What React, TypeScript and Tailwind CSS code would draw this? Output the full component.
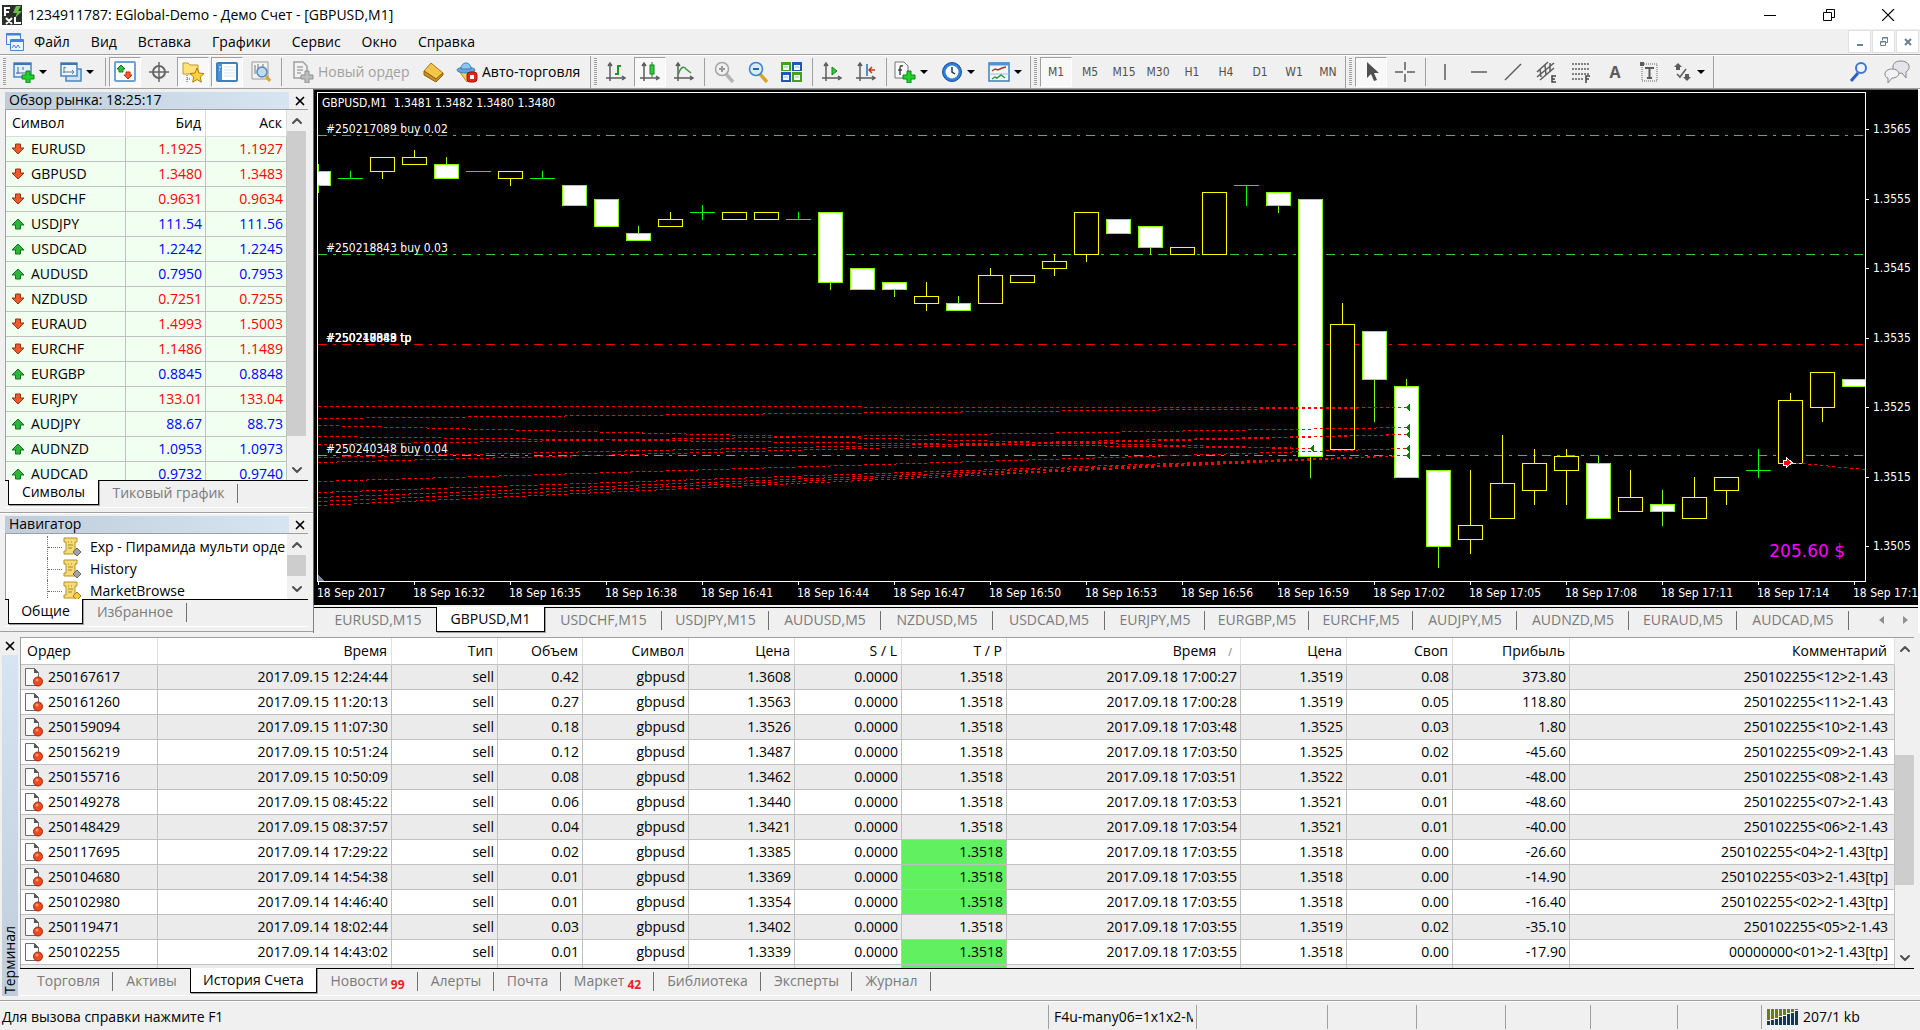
import type { ReactNode } from "react";
import { ChevronDown, ChevronUp, X } from "lucide-react";
import clsx from "clsx";

type Quote = { symbol: string; bid: string; ask: string; up: boolean };

const quotes: Quote[] = [
  { symbol: "EURUSD", bid: "1.1925", ask: "1.1927", up: false },
  { symbol: "GBPUSD", bid: "1.3480", ask: "1.3483", up: false },
  { symbol: "USDCHF", bid: "0.9631", ask: "0.9634", up: false },
  { symbol: "USDJPY", bid: "111.54", ask: "111.56", up: true },
  { symbol: "USDCAD", bid: "1.2242", ask: "1.2245", up: true },
  { symbol: "AUDUSD", bid: "0.7950", ask: "0.7953", up: true },
  { symbol: "NZDUSD", bid: "0.7251", ask: "0.7255", up: false },
  { symbol: "EURAUD", bid: "1.4993", ask: "1.5003", up: false },
  { symbol: "EURCHF", bid: "1.1486", ask: "1.1489", up: false },
  { symbol: "EURGBP", bid: "0.8845", ask: "0.8848", up: true },
  { symbol: "EURJPY", bid: "133.01", ask: "133.04", up: false },
  { symbol: "AUDJPY", bid: "88.67", ask: "88.73", up: true },
  { symbol: "AUDNZD", bid: "1.0953", ask: "1.0973", up: true },
  { symbol: "AUDCAD", bid: "0.9732", ask: "0.9740", up: true },
];

// [high, top, bottom, low, kind] in pips above 1.3500
type Kind = "bull" | "bear" | "doji";
const candles: [number, number, number, number, Kind][] = [
  [60, 59, 57, 56, "bear"],
  [59, 58, 58, 58, "doji"],
  [61, 61, 59, 58, "bull"],
  [62, 61, 60, 60, "bull"],
  [61, 60, 58, 58, "bear"],
  [59, 59, 59, 59, "doji"],
  [59, 59, 58, 57, "bull"],
  [59, 58, 58, 58, "doji"],
  [57, 57, 54, 54, "bear"],
  [55, 55, 51, 51, "bear"],
  [51, 50, 49, 49, "bear"],
  [53, 52, 51, 51, "bull"],
  [54, 53, 53, 52, "doji"],
  [53, 53, 52, 52, "bull"],
  [53, 53, 52, 52, "bull"],
  [53, 52, 52, 52, "doji"],
  [53, 53, 43, 42, "bear"],
  [45, 45, 42, 42, "bear"],
  [43, 43, 42, 41, "bear"],
  [43, 41, 40, 39, "bull"],
  [41, 40, 39, 39, "bear"],
  [45, 44, 40, 40, "bull"],
  [44, 44, 43, 43, "bull"],
  [47, 46, 45, 44, "bull"],
  [53, 53, 47, 46, "bull"],
  [52, 52, 50, 50, "bear"],
  [51, 51, 48, 47, "bear"],
  [48, 48, 47, 47, "bull"],
  [56, 56, 47, 47, "bull"],
  [57, 57, 57, 54, "doji"],
  [56, 56, 54, 53, "bear"],
  [55, 55, 18, 15, "bear"],
  [40, 37, 19, 19, "bull"],
  [36, 36, 29, 23, "bear"],
  [29, 28, 15, 15, "bear"],
  [16, 16, 5, 2, "bear"],
  [16, 8, 6, 4, "bull"],
  [21, 14, 9, 9, "bull"],
  [19, 17, 13, 11, "bull"],
  [19, 18, 16, 11, "bull"],
  [18, 17, 9, 9, "bear"],
  [16, 12, 10, 10, "bull"],
  [13, 11, 10, 8, "bear"],
  [15, 12, 9, 9, "bull"],
  [15, 15, 13, 11, "bull"],
  [19, 16, 16, 15, "doji"],
  [27, 26, 17, 17, "bull"],
  [30, 30, 25, 23, "bull"],
  [29, 29, 28, 28, "bear"],
];

// closed deals drawn as [x1, y1, x2, y2]
const deals = [
  [0, 313, 1090, 314],
  [0, 325, 1090, 314],
  [0, 332, 994, 355],
  [0, 343, 994, 355],
  [0, 351, 1090, 334],
  [0, 364, 1090, 341],
  [0, 369, 1090, 341],
  [0, 388, 1090, 355],
  [0, 399, 1090, 362],
  [0, 404, 1090, 362],
  [0, 408, 1090, 362],
  [0, 412, 1090, 362],
  [1472, 369, 1547, 376],
];

const exits = [
  [1088, 314],
  [1088, 334],
  [1088, 341],
  [1088, 355],
  [1088, 362],
  [992, 355],
];

const times = [
  "2017", "16:32", "16:35", "16:38", "16:41", "16:44", "16:47", "16:50", "16:53",
  "16:56", "16:59", "17:02", "17:05", "17:08", "17:11", "17:14", "17:17",
];

const prices = ["1.3565", "1.3555", "1.3545", "1.3535", "1.3525", "1.3515", "1.3505"];

const chartTabs = [
  { name: "EURUSD,M15", width: "w-[122px] pl-[6px]" },
  { name: "GBPUSD,M1", width: "w-[109px]" },
  { name: "USDCHF,M15", width: "w-[117px]" },
  { name: "USDJPY,M15", width: "w-[107px]" },
  { name: "AUDUSD,M5", width: "w-[112px]" },
  { name: "NZDUSD,M5", width: "w-[112px]" },
  { name: "USDCAD,M5", width: "w-[112px]" },
  { name: "EURJPY,M5", width: "w-[100px]" },
  { name: "EURGBP,M5", width: "w-[104px]" },
  { name: "EURCHF,M5", width: "w-[104px]" },
  { name: "AUDJPY,M5", width: "w-[104px]" },
  { name: "AUDNZD,M5", width: "w-[112px]" },
  { name: "EURAUD,M5", width: "w-[108px]" },
  { name: "AUDCAD,M5", width: "w-[112px]" },
];

const orders = [
  ["250167617", "2017.09.15 12:24:44", "0.42", "1.3608", "2017.09.18 17:00:27", "1.3519", "0.08", "373.80", "250102255<12>2-1.43"],
  ["250161260", "2017.09.15 11:20:13", "0.27", "1.3563", "2017.09.18 17:00:28", "1.3519", "0.05", "118.80", "250102255<11>2-1.43"],
  ["250159094", "2017.09.15 11:07:30", "0.18", "1.3526", "2017.09.18 17:03:48", "1.3525", "0.03", "1.80", "250102255<10>2-1.43"],
  ["250156219", "2017.09.15 10:51:24", "0.12", "1.3487", "2017.09.18 17:03:50", "1.3525", "0.02", "-45.60", "250102255<09>2-1.43"],
  ["250155716", "2017.09.15 10:50:09", "0.08", "1.3462", "2017.09.18 17:03:51", "1.3522", "0.01", "-48.00", "250102255<08>2-1.43"],
  ["250149278", "2017.09.15 08:45:22", "0.06", "1.3440", "2017.09.18 17:03:53", "1.3521", "0.01", "-48.60", "250102255<07>2-1.43"],
  ["250148429", "2017.09.15 08:37:57", "0.04", "1.3421", "2017.09.18 17:03:54", "1.3521", "0.01", "-40.00", "250102255<06>2-1.43"],
  ["250117695", "2017.09.14 17:29:22", "0.02", "1.3385", "2017.09.18 17:03:55", "1.3518", "0.00", "-26.60", "250102255<04>2-1.43[tp]"],
  ["250104680", "2017.09.14 14:54:38", "0.01", "1.3369", "2017.09.18 17:03:55", "1.3518", "0.00", "-14.90", "250102255<03>2-1.43[tp]"],
  ["250102980", "2017.09.14 14:46:40", "0.01", "1.3354", "2017.09.18 17:03:55", "1.3518", "0.00", "-16.40", "250102255<02>2-1.43[tp]"],
  ["250119471", "2017.09.14 18:02:44", "0.03", "1.3402", "2017.09.18 17:03:55", "1.3519", "0.02", "-35.10", "250102255<05>2-1.43"],
  ["250102255", "2017.09.14 14:43:02", "0.01", "1.3339", "2017.09.18 17:03:55", "1.3518", "0.00", "-17.90", "00000000<01>2-1.43[tp]"],
];

const terminalTabs = [
  { name: "Торговля", width: "w-[93px] pl-1" },
  { name: "Активы", width: "w-[77px]" },
  { name: "История Счета", width: "w-[127px]" },
  { name: "Новости", width: "w-[101px]", badge: "99" },
  { name: "Алерты", width: "w-[76px]" },
  { name: "Почта", width: "w-[67px]" },
  { name: "Маркет", width: "w-[93px]", badge: "42" },
  { name: "Библиотека", width: "w-[107px]" },
  { name: "Эксперты", width: "w-[91px]" },
  { name: "Журнал", width: "w-[79px]" },
];

const menus = ["Файл", "Вид", "Вставка", "Графики", "Сервис", "Окно", "Справка"];
const periods = ["M1", "M5", "M15", "M30", "H1", "H4", "D1", "W1", "MN"];

const CHART_FONT = "font-['DejaVu_Sans_Condensed','DejaVu_Sans',sans-serif] text-[12px]";

/* ---------- icons ---------- */

function Icon({ size = 22, children }: { size?: number; children: ReactNode }) {
  return (
    <svg width={size} height={size} viewBox="0 0 22 22" fill="none" className="shrink-0" aria-hidden="true">
      {children}
    </svg>
  );
}

function Plus() {
  return <path d="M13 10h4v4h4v4h-4v4h-4v-4H9v-4h4z" fill="#1fd12a" stroke="#0b8a14" />;
}

function Axes() {
  return <path d="M5 20V3M3 5l2-3 2 3M1 17h18M17 15l3 2-3 2" stroke="#5c5c5c" strokeWidth="1.5" />;
}

function NewChartIcon() {
  return (
    <Icon>
      <rect x="1" y="2" width="17" height="14" fill="#e3f0fb" stroke="#4a86bf" strokeWidth="1.5" />
      <path d="M1 3h17" stroke="#3b76b3" strokeWidth="2" />
      <path d="M5 6v7M3 12h11M10 6v3" stroke="#44698c" />
      <Plus />
    </Icon>
  );
}

function ProfilesIcon() {
  return (
    <Icon>
      <rect x="6" y="8" width="15" height="12" fill="#cfe3f5" stroke="#4a86bf" strokeWidth="1.5" />
      <rect x="1" y="2" width="16" height="13" fill="#eef6fd" stroke="#4a86bf" strokeWidth="1.5" />
      <path d="M1 3h16" stroke="#3b76b3" strokeWidth="2" />
      <path d="M4 6v6M3 11h11M6 7l-2-1M12 9l2 2-2 2" stroke="#5d7f9f" />
    </Icon>
  );
}

function MarketWatchIcon() {
  return (
    <Icon>
      <rect x="1" y="1" width="20" height="19" rx="1" fill="#fff" stroke="#6fa3d4" strokeWidth="2" />
      <path d="M7 4l4 4H9v3H5V8H3z" fill="#2fbf3a" stroke="#14801d" />
      <path d="M14 18l4-4h-2v-3h-4v3h-2z" fill="#ff5a2e" stroke="#b52d0c" />
    </Icon>
  );
}

function TargetIcon() {
  return (
    <Icon>
      <circle cx="11" cy="11" r="6" stroke="#666" strokeWidth="2" />
      <path d="M11 1v20M1 11h20" stroke="#666" strokeWidth="1.5" />
    </Icon>
  );
}

function NavigatorIcon() {
  return (
    <Icon>
      <path d="M1 2h5l2 2h8v9H1z" fill="#ffe27a" stroke="#c39a22" />
      <path d="M5 14v7M5 18h4" stroke="#555" strokeDasharray="1 1" />
      <path d="M15 7l2 5 5 .6-3.700 3.400 1 5.200L15 18.500 10.700 21.200l1-5.200L8 12.600l5-.6z" fill="#ffd23c" stroke="#ac7c10" />
    </Icon>
  );
}

function TerminalIcon() {
  return (
    <Icon>
      <rect x="1" y="2" width="20" height="18" rx="1" fill="#fff" stroke="#3f7fbd" strokeWidth="2" />
      <rect x="2" y="3" width="4" height="16" fill="#4d92d6" />
      <path d="M8 6h11M8 9h11M8 12h11M8 15h11" stroke="#d3e4f3" />
      <path d="M3 6h2M3 9h1" stroke="#fff" />
    </Icon>
  );
}

function TesterIcon() {
  return (
    <Icon>
      <path d="M2 1h16v17H2z" fill="#f3f3f3" stroke="#999" />
      <path d="M5 4v9M8 3v6M13 3v5" stroke="#777" />
      <circle cx="12" cy="11" r="5" fill="#bcdcf5" stroke="#5587b5" strokeWidth="1.5" />
      <path d="M16 15l4 5" stroke="#d5a52d" strokeWidth="3" />
    </Icon>
  );
}

function NewOrderIcon() {
  return (
    <Icon>
      <path d="M2 1h9l4 4v12H2z" fill="#f2f2f2" stroke="#a0a0a0" strokeWidth="1.5" />
      <path d="M5 6h6M5 9h6M5 12h4" stroke="#a8a8a8" strokeWidth="1.5" />
      <path d="M13 10h4v4h4v4h-4v4h-4v-4H9v-4h4z" fill="#bdbdbd" stroke="#8f8f8f" />
    </Icon>
  );
}

function BookIcon() {
  return (
    <Icon>
      <path d="M8 2l12 10-7 6L1 10z" fill="#f3c64b" stroke="#a8761a" />
      <path d="M1 10v4l12 7 7-7v-2l-7 6z" fill="#c98f25" stroke="#8f6212" />
    </Icon>
  );
}

function AutoTradeIcon() {
  return (
    <Icon>
      <path d="M3 10l8 11 8-10z" fill="#f5d25b" stroke="#b8881d" />
      <ellipse cx="10" cy="9" rx="9" ry="3" fill="#65a9dd" stroke="#3c7eb5" />
      <path d="M5 8c0-8 10-8 10 0z" fill="#8cc8f0" stroke="#3c7eb5" />
      <rect x="11" y="11" width="10" height="10" rx="3" fill="#e3251b" stroke="#a50e0a" />
      <rect x="14" y="14" width="4" height="4" fill="#fff" />
    </Icon>
  );
}

function ZoomIcon({ plus }: { plus?: boolean }) {
  return (
    <Icon>
      <path d="M13 13l7 8" stroke={plus ? "#b5b5b5" : "#d5a52d"} strokeWidth="3.500" />
      <circle cx="9" cy="8" r="6.500" fill={plus ? "#f0f0f0" : "#d8ecfb"} stroke={plus ? "#a5a5a5" : "#3c82c4"} strokeWidth="1.500" />
      <path d="M6 8h6" stroke={plus ? "#999" : "#2268ac"} strokeWidth="2" />
      {plus && <path d="M9 5v6" stroke="#999" strokeWidth="2" />}
    </Icon>
  );
}

function TileIcon() {
  return (
    <Icon>
      <rect x="0" y="1" width="10" height="9" fill="#46a01c" />
      <rect x="11" y="1" width="10" height="9" fill="#2457b5" />
      <rect x="0" y="11" width="10" height="10" fill="#2457b5" />
      <rect x="11" y="11" width="10" height="10" fill="#46a01c" />
      <path d="M2 4h6v5H2zM13 4h6v5h-6zM2 14h6v5H2zM13 14h6v5h-6z" fill="#f5fbff" />
      <path d="M3 6h4M14 6h4M3 16h4M14 16h4" stroke="#8fb7d8" />
    </Icon>
  );
}

function IndicatorsIcon() {
  return (
    <Icon>
      <path d="M1 1h9l4 4v12H1z" fill="#fafafa" stroke="#777" />
      <path d="M9 5c-3-1-3 1-3 3v6M4 9h4" stroke="#444" strokeWidth="1.500" />
      <Plus />
    </Icon>
  );
}

function ClockIcon() {
  return (
    <Icon>
      <circle cx="11" cy="11" r="9.500" fill="#2f7fd6" stroke="#184f96" />
      <circle cx="11" cy="11" r="6.500" fill="#f4f9fe" />
      <path d="M11 6v5l3 2" stroke="#333" strokeWidth="1.500" />
    </Icon>
  );
}

function TemplateIcon() {
  return (
    <Icon>
      <rect x="1" y="2" width="20" height="18" fill="#f2f8fd" stroke="#3f7fbd" strokeWidth="1.500" />
      <path d="M1 3h20" stroke="#4d92d6" strokeWidth="3" />
      <path d="M1 13h20" stroke="#9bbfdf" />
      <path d="M4 10l3-2 3 1 4-2 4-1" stroke="#a33a1c" strokeWidth="1.500" />
      <path d="M4 18l3-2 2 1 4-3 4 3" stroke="#35963b" strokeWidth="1.500" />
    </Icon>
  );
}

function CrossIcon() {
  return (
    <Icon>
      <path d="M11 1v8M11 13v8M1 11h8M13 11h8" stroke="#5c5c5c" strokeWidth="1.500" />
    </Icon>
  );
}

function ChannelIcon() {
  return (
    <Icon>
      <path d="M1 11L12 1M1 16L18 2M4 19L18 7M4 8l1 8M9 4l1 10M14 2l0 9" stroke="#5c5c5c" strokeWidth="1.500" />
      <path d="M20 15h-4v6h4M16 18h3" stroke="#444" strokeWidth="1.500" />
    </Icon>
  );
}

function FiboIcon() {
  return (
    <Icon>
      <path d="M2 3h18M2 8h18M2 13h18M2 18h11" stroke="#5c5c5c" strokeWidth="1.500" strokeDasharray="2 1" />
      <path d="M16 22v-7h4M16 18h3" stroke="#444" strokeWidth="1.500" />
    </Icon>
  );
}

function LabelIcon() {
  return (
    <Icon>
      <rect x="4" y="3" width="15" height="17" stroke="#666" strokeDasharray="1 1" />
      <path d="M7 7h9M11.500 7v10M9 17h5" stroke="#5c5c5c" strokeWidth="2" />
      <path d="M2 1h4v4H2z" fill="#5c5c5c" />
    </Icon>
  );
}

function ArrowsIcon() {
  return (
    <Icon>
      <path d="M7 2l4 4-2 0v3H5V6H3z" fill="#5c5c5c" />
      <path d="M16 20l4-4h-2v-3h-4v3h-2z" fill="#5c5c5c" />
      <path d="M6 13l3 3 6-8" stroke="#5c5c5c" strokeWidth="1.500" />
    </Icon>
  );
}

function TrendArrow({ up }: { up: boolean }) {
  return (
    <svg width="14" height="12" viewBox="0 0 14 12" className="shrink-0" aria-hidden="true">
      {up ? (
        <path d="M7 1l6 6H9.500v4h-5V7H1z" fill="#2bb53a" stroke="#14701e" />
      ) : (
        <path d="M7 11L1 5h3.500V1h5v4H13z" fill="#ee5a2b" stroke="#9c3110" />
      )}
    </svg>
  );
}

function OrderIcon() {
  return (
    <svg width="20" height="20" viewBox="0 0 20 20" className="shrink-0" aria-hidden="true">
      <path d="M1.500 1.500h9l4 4v13h-13z" fill="#fafafa" stroke="#6b6b6b" />
      <path d="M10 1v5h5z" fill="#555" />
      <circle cx="14" cy="14.500" r="4.500" fill="#ee4a1f" stroke="#a12a0a" />
      <circle cx="13" cy="13" r="1.500" fill="#ff9670" />
    </svg>
  );
}

function ScriptIcon({ gold }: { gold?: boolean }) {
  return (
    <svg width="20" height="20" viewBox="0 0 20 20" className="shrink-0" aria-hidden="true">
      <path d="M2 1h13v4h-2v9h2v3H2v-3h2V5H2z" fill="#f7dc74" stroke="#b3902b" />
      <path d="M6 5h1M9 5h1M6 8h5M6 11h4" stroke="#a8861f" />
      <path d="M15 11l4 4-4 4-4-4z" fill={gold ? "#f4cd3c" : "#a3a3a3"} stroke={gold ? "#a67a10" : "#666"} />
    </svg>
  );
}

/* ---------- toolbar ---------- */

type ToolProps = { label: string; active?: boolean; drop?: boolean; children: ReactNode };

function Tool({ label, active, drop, children }: ToolProps) {
  return (
    <button
      type="button"
      aria-label={label}
      aria-pressed={active}
      className={clsx(
        "mx-px flex h-[30px] items-center justify-center border",
        drop ? "w-[45px] gap-1 pr-1" : "w-8",
        active ? "border-[#a0a0a0] border-r-white border-b-white bg-[#f8f8f8]" : "border-transparent",
      )}
    >
      {children}
      {drop && <span className="h-0 w-0 border-x-4 border-t-4 border-x-transparent border-t-black" />}
    </button>
  );
}

function Sep() {
  return <div className="mr-[2px] ml-[3px] h-7 w-px bg-[#a0a0a0]" />;
}

function Grip() {
  return (
    <div className="ml-[3px] mr-[2px] h-7 w-[3px] bg-[repeating-linear-gradient(#a0a0a0_0_1px,#f0f0f0_1px_2px)]" />
  );
}

function ToolGroup({ children }: { children: ReactNode }) {
  return <div className="flex h-full items-center border-r border-[#a0a0a0]">{children}</div>;
}

function Toolbar() {
  return (
    <div className="flex h-[33px] items-center border-b border-[#a0a0a0]">
      <ToolGroup>
        <Grip />
        <Tool label="Новый график" drop><NewChartIcon /></Tool>
        <Tool label="Профили" drop><ProfilesIcon /></Tool>
        <Sep />
        <Tool label="Обзор рынка" active><MarketWatchIcon /></Tool>
        <Tool label="Окно данных"><TargetIcon /></Tool>
        <Tool label="Навигатор" active><NavigatorIcon /></Tool>
        <Tool label="Терминал" active><TerminalIcon /></Tool>
        <Tool label="Тестер стратегий"><TesterIcon /></Tool>
        <Sep />
        <button type="button" className="flex w-[133px] items-center gap-1 pl-2 text-[#a0a0a0]">
          <NewOrderIcon />
          <span className="whitespace-nowrap">Новый ордер</span>
        </button>
        <Tool label="MetaEditor"><BookIcon /></Tool>
        <button type="button" className="flex w-[139px] items-center gap-1 pl-[5px]">
          <AutoTradeIcon />
          <span className="whitespace-nowrap">Авто-торговля</span>
        </button>
      </ToolGroup>
      <ToolGroup>
        <Grip />
        <Tool label="Бары">
          <Icon><Axes /><path d="M13 4v10M10 13h3M13 5h3" stroke="#1b9a22" strokeWidth="2" /></Icon>
        </Tool>
        <Tool label="Японские свечи" active>
          <Icon><Axes /><path d="M13 1v15" stroke="#14801d" /><rect x="11" y="4" width="4" height="9" fill="#2fd13a" stroke="#14801d" /></Icon>
        </Tool>
        <Tool label="Линия">
          <Icon><Axes /><path d="M5 14c3-9 6-9 8-6l5 4" stroke="#3c9442" strokeWidth="1.500" /></Icon>
        </Tool>
        <Sep />
        <Tool label="Увеличить"><ZoomIcon plus /></Tool>
        <Tool label="Уменьшить"><ZoomIcon /></Tool>
        <Tool label="Окна мозаикой"><TileIcon /></Tool>
        <Sep />
        <Tool label="Автопрокрутка">
          <Icon><Axes /><path d="M11 6l5 4-5 4z" fill="#2fd13a" stroke="#14801d" /></Icon>
        </Tool>
        <Tool label="Сдвиг графика">
          <Icon><Axes /><path d="M12 3v12" stroke="#2c6bb3" strokeWidth="1.500" /><path d="M20 9h-5M17 6l-3 3 3 3" stroke="#c03a10" strokeWidth="1.500" /></Icon>
        </Tool>
        <Sep />
        <Tool label="Индикаторы" drop><IndicatorsIcon /></Tool>
        <Tool label="Периоды" drop><ClockIcon /></Tool>
        <Tool label="Шаблоны" drop><TemplateIcon /></Tool>
      </ToolGroup>
      <ToolGroup>
        <Grip />
        {periods.map((period, i) => (
          <Tool key={period} label={period} active={i === 0}>
            <span className="font-['DejaVu_Sans_Condensed',sans-serif] text-[12px] text-[#505050]">{period}</span>
          </Tool>
        ))}
      </ToolGroup>
      <ToolGroup>
        <Grip />
        <Tool label="Курсор" active>
          <Icon><path d="M7 1v16l4-4 3 7 3-1-3-7h5z" fill="#505050" /></Icon>
        </Tool>
        <Tool label="Перекрестие"><CrossIcon /></Tool>
        <Sep />
        <Tool label="Вертикальная линия"><Icon><path d="M11 3v16" stroke="#5c5c5c" strokeWidth="1.500" /></Icon></Tool>
        <Tool label="Горизонтальная линия"><Icon><path d="M3 11h16" stroke="#5c5c5c" strokeWidth="1.500" /></Icon></Tool>
        <Tool label="Трендовая линия"><Icon><path d="M3 19L19 3" stroke="#5c5c5c" strokeWidth="1.500" /></Icon></Tool>
        <Tool label="Канал"><ChannelIcon /></Tool>
        <Tool label="Фибоначчи"><FiboIcon /></Tool>
        <Tool label="Текст"><span className="text-[16px] font-bold text-[#5c5c5c]">A</span></Tool>
        <Tool label="Метка"><LabelIcon /></Tool>
        <Tool label="Стрелки" drop><ArrowsIcon /></Tool>
      </ToolGroup>
      <div className="ml-auto flex items-center gap-[14px] pr-[10px]">
        <button type="button" aria-label="Поиск">
          <Icon>
            <path d="M10 12l-7 8" stroke="#2a5fc4" strokeWidth="3" />
            <circle cx="13" cy="7" r="5" fill="#eef4fd" stroke="#3f74d0" strokeWidth="2" />
          </Icon>
        </button>
        <button type="button" aria-label="Сообщения">
          <svg width="26" height="24" viewBox="0 0 26 24" aria-hidden="true">
            <path d="M17 1c-5 0-8 2-8 6 0 5 4 7 9 6l4 5v-6c6-4 3-11-5-11z" fill="#e4e4ea" stroke="#85858e" />
            <path d="M8 9c-4 0-7 2-7 5 0 2 1 4 3 4v5l4-5c9 0 9-9 0-9z" fill="#f2f2f6" stroke="#85858e" />
          </svg>
        </button>
      </div>
    </div>
  );
}

/* ---------- shared panel parts ---------- */

function PanelTitle({ children }: { children: ReactNode }) {
  return (
    <div className="ml-[5px] mr-[5px] flex h-[17px] items-center">
      <h2 className="h-full w-[284px] bg-linear-to-r from-[#bfcddb] to-[#d7e4f2] pl-1 leading-[15px]">{children}</h2>
      <button type="button" aria-label="Закрыть" className="ml-1">
        <X size={14} strokeWidth={3} />
      </button>
    </div>
  );
}

type ScrollbarProps = { before?: string; thumb: string };

function Scrollbar({ before, thumb }: ScrollbarProps) {
  return (
    <div className="flex w-[19px] shrink-0 flex-col items-center bg-[#f0f0f0] text-[#505050]">
      <button type="button" aria-label="Вверх" className="flex h-[21px] items-center">
        <ChevronUp size={16} strokeWidth={3} />
      </button>
      {before && <div className={before} />}
      <div className={clsx("w-full bg-[#cdcdcd]", thumb)} />
      <button type="button" aria-label="Вниз" className="mt-auto flex h-[21px] items-center">
        <ChevronDown size={16} strokeWidth={3} />
      </button>
    </div>
  );
}

type TabProps = { active?: boolean; divider?: boolean; className?: string; children: ReactNode };

function Tab({ active, divider, className, children }: TabProps) {
  return (
    <button
      type="button"
      role="tab"
      aria-selected={!!active}
      className={clsx(
        "relative flex h-6 shrink-0 items-center justify-center whitespace-nowrap",
        active
          ? "-mt-px h-[25px] border border-t-0 border-black bg-white text-black shadow-[1px_1px_0_#a0a0a0]"
          : "text-[#7a7a7a]",
        className,
      )}
    >
      {children}
      {divider && <span className="absolute right-0 top-[3px] h-[19px] w-px bg-[#707070]" />}
    </button>
  );
}

function MarketWatch() {
  const cell = "h-[25px] border-r border-b border-[#c0c0c0] py-0 pr-[3px] text-right";
  return (
    <section className="border-b border-[#a0a0a0] pt-[3px]">
      <PanelTitle>Обзор рынка: 18:25:17</PanelTitle>
      <div className="mx-[5px] border-b border-white">
        <div className="flex h-[371px] overflow-hidden border-t border-l border-[#a0a0a0] bg-white">
          <div className="flex-1">
            <table className="w-full table-fixed border-separate border-spacing-0">
              <colgroup>
                <col />
                <col className="w-20" />
                <col className="w-[81px]" />
              </colgroup>
              <thead>
                <tr>
                  <th className="h-[27px] border-r border-b border-[#dcdcdc] py-0 pl-[6px] text-left font-normal">Символ</th>
                  <th className="border-r border-b border-[#dcdcdc] py-0 pr-1 text-right font-normal">Бид</th>
                  <th className="border-r border-b border-[#dcdcdc] py-0 pr-1 text-right font-normal">Аск</th>
                </tr>
              </thead>
              <tbody className="bg-[#f0fff0]">
                {quotes.map((q) => (
                  <tr key={q.symbol} className={q.up ? "text-[#0000ff]" : "text-[#ff0000]"}>
                    <td className="h-[25px] border-r border-b border-[#c0c0c0] py-0 pl-[5px] text-black">
                      <span className="flex items-center gap-[6px]">
                        <TrendArrow up={q.up} />
                        {q.symbol}
                      </span>
                    </td>
                    <td className={cell}>{q.bid}</td>
                    <td className={cell}>{q.ask}</td>
                  </tr>
                ))}
              </tbody>
            </table>
          </div>
          <Scrollbar thumb="h-[305px]" />
          <div className="w-[2px] bg-[#f0f0f0]" />
        </div>
        <div role="tablist" className="mb-[2px] flex h-[25px] border-t border-black pl-[3px]">
          <Tab active className="w-[91px]">Символы</Tab>
          <Tab divider className="w-[139px]">Тиковый график</Tab>
        </div>
      </div>
      <div className="h-1" />
    </section>
  );
}

function Navigator() {
  const items = [{ name: "Exp - Пирамида мульти орде" }, { name: "History" }, { name: "MarketBrowse", gold: true }];
  return (
    <section className="border-t border-white border-b border-b-[#a0a0a0] pt-[2px]">
      <PanelTitle>Навигатор</PanelTitle>
      <div className="mx-[5px] border-b border-white">
        <div className="flex h-[66px] overflow-hidden border-t border-l border-[#a0a0a0] bg-white">
          <ul className="min-w-0 flex-1 overflow-hidden pt-[2px]">
            {items.map((item) => (
              <li key={item.name} className="ml-[41px] flex h-[22px] items-center whitespace-nowrap border-l border-dotted border-[#707070]">
                <span className="w-[14px] shrink-0 border-t border-dotted border-[#707070]" />
                <ScriptIcon gold={item.gold} />
                <span className="pl-2">{item.name}</span>
              </li>
            ))}
          </ul>
          <Scrollbar thumb="h-[21px]" />
          <div className="w-[2px] bg-[#f0f0f0]" />
        </div>
        <div role="tablist" className="mb-[2px] flex h-[25px] border-t border-black pl-[3px]">
          <Tab active className="w-[75px]">Общие</Tab>
          <Tab divider className="w-[104px]">Избранное</Tab>
        </div>
      </div>
      <div className="h-1" />
    </section>
  );
}

/* ---------- chart ---------- */

const STEP = 32;
const pipY = (pips: number) => Math.round(36 + (65 - pips) * 6.95);

function Candle({ index }: { index: number }) {
  const [high, top, bottom, low, kind] = candles[index];
  const x = index * STEP;
  const color = { bull: "#ffff00", bear: "#7fff00", doji: "#00ff00" }[kind];
  const fill = kind === "bear" ? "#ffffff" : "#000000";
  return (
    <g>
      {high > top && <rect x={x} y={pipY(high)} width="1" height={pipY(top) - pipY(high)} fill={color} />}
      {low < bottom && <rect x={x} y={pipY(bottom)} width="1" height={pipY(low) - pipY(bottom) + 1} fill={color} />}
      {kind === "doji" ? (
        <rect x={x - 12} y={pipY(top)} width="25" height="1" fill={color} />
      ) : (
        <>
          <rect x={x - 12} y={pipY(top)} width="25" height={pipY(bottom) - pipY(top) + 1} fill={color} />
          <rect x={x - 11} y={pipY(top) + 1} width="23" height={pipY(bottom) - pipY(top) - 1} fill={fill} />
        </>
      )}
    </g>
  );
}

function Level({ y, color }: { y: number; color: string }) {
  return <line x1="0" x2="100%" y1={y + 0.5} y2={y + 0.5} stroke={color} strokeDasharray="9 6 3 6" />;
}

function Plot() {
  return (
    <svg
      className="block h-[488px] w-full"
      shapeRendering="crispEdges"
      role="img"
      aria-label="GBPUSD,M1"
    >
      <Level y={42} color="#32cd32" />
      <Level y={161} color="#32cd32" />
      <Level y={251} color="#ff0000" />
      <Level y={362} color="#32cd32" />
      {candles.map((_, i) => (
        <Candle key={i} index={i} />
      ))}
      {deals.map(([x1, y1, x2, y2], i) => (
        <line key={i} x1={x1} y1={y1 + 0.5} x2={x2} y2={y2 + 0.5} stroke="#ff0000" strokeDasharray="3 3" />
      ))}
      {exits.map(([x, y], i) => (
        <path key={i} d={`M${x} ${y + 0.5}l4 -4v8z`} fill="#008000" />
      ))}
      <path d="M1465 367h3v-3l6 5.500-6 5.500v-3h-3z" fill="#ff0000" stroke="#ffffff" />
      <path d="M0 482l6 6H0z" fill="#778899" />
      <g fill="#ffffff">
        <text x="4" y="14" className="whitespace-pre">{"GBPUSD,M1  1.3481 1.3482 1.3480 1.3480"}</text>
        <text x="8" y="40">#250217089 buy 0.02</text>
        <text x="8" y="159">#250218843 buy 0.03</text>
        <text x="8" y="249">#250217089 tp</text>
        <text x="8" y="249">#250218843 tp</text>
        <text x="8" y="249">#250240348 tp</text>
        <text x="8" y="360">#250240348 buy 0.04</text>
      </g>
    </svg>
  );
}

function Chart() {
  return (
    <div className={clsx("border-t border-l border-[#696969] bg-black pl-[3px] pt-[2px] text-white", CHART_FONT)}>
      <div className="flex">
        <div className="relative min-w-0 flex-1 border border-white">
          <Plot />
          <div className="absolute bottom-[18px] right-5 font-['DejaVu_Sans',sans-serif] text-[17px] leading-6 text-[#ff00ff]">
            205.60 $
          </div>
        </div>
        <ul className="h-[490px] w-[52px] overflow-hidden pt-[28px]">
          {prices.map((price, i) => (
            <li key={price} className={clsx("flex items-start", i % 2 ? "h-[69px]" : "h-[70px]")}>
              <span className="flex items-center gap-1">
                <span className="h-px w-[3px] bg-white" />
                <span className="leading-[18px]">{price}</span>
              </span>
            </li>
          ))}
        </ul>
      </div>
      <ol className="flex h-[23px] overflow-hidden">
        {times.map((time) => (
          <li key={time} className="w-24 shrink-0 whitespace-nowrap">
            <div className="ml-px h-[3px] w-px bg-white" />
            <div className="leading-4">18 Sep {time}</div>
          </li>
        ))}
      </ol>
    </div>
  );
}

function ChartTabs() {
  return (
    <div className="border-l border-[#808080]">
      <div className="h-[2px] bg-[#f0f0f0]" />
      <div role="tablist" className="flex h-[26px] border-t border-black">
        {chartTabs.map((tab, i) => (
          <Tab key={tab.name} active={i === 1} divider={i > 1} className={tab.width}>
            {tab.name}
          </Tab>
        ))}
        <div className="ml-auto flex h-6 items-center gap-[19px] pr-[10px]">
          <button type="button" aria-label="Назад" className="h-0 w-0 border-y-4 border-r-[5px] border-y-transparent border-r-[#909090]" />
          <button type="button" aria-label="Вперед" className="h-0 w-0 border-y-4 border-l-[5px] border-y-transparent border-l-[#909090]" />
        </div>
      </div>
    </div>
  );
}

/* ---------- terminal ---------- */

function Terminal() {
  const heads = ["Время", "Тип", "Объем", "Символ", "Цена", "S / L", "T / P", "Время", "Цена", "Своп", "Прибыль", "Комментарий"];
  return (
    <section className="flex min-h-0 flex-1 border-b border-[#a0a0a0] pt-1 pb-[4px]">
      <div className="flex w-5 shrink-0 flex-col items-center">
        <button type="button" aria-label="Закрыть" className="flex h-[18px] items-center">
          <X size={14} strokeWidth={3} />
        </button>
        <div className="flex w-4 flex-1 flex-col justify-end bg-linear-to-b from-[#d7e4f2] to-[#bfcddb] pb-[2px]">
          <h2 className="w-4 rotate-180 leading-4 whitespace-nowrap [writing-mode:vertical-rl]">Терминал</h2>
        </div>
      </div>
      <div className="flex min-w-0 flex-1 flex-col border-b border-white pr-[6px]">
        <div className="flex min-h-0 flex-1 overflow-hidden border-t border-l border-[#a0a0a0] bg-white">
          <div className="min-w-0 flex-1 overflow-hidden">
            <table className="w-full table-fixed border-separate border-spacing-0">
              <colgroup>
                <col className="w-[137px]" />
                <col className="w-[234px]" />
                <col className="w-[106px]" />
                <col className="w-[85px]" />
                <col className="w-[106px]" />
                <col className="w-[106px]" />
                <col className="w-[107px]" />
                <col className="w-[105px]" />
                <col className="w-[234px]" />
                <col className="w-[106px]" />
                <col className="w-[106px]" />
                <col className="w-[117px]" />
                <col />
              </colgroup>
              <thead>
                <tr>
                  <th className="h-[27px] border-r border-b border-r-[#e0e0e0] border-b-[#c0c0c0] py-0 pl-[6px] text-left font-normal">Ордер</th>
                  {heads.map((head, i) => (
                    <th
                      key={i}
                      className={clsx(
                        "border-r border-b border-r-[#e0e0e0] border-b-[#c0c0c0] py-0 text-right font-normal",
                        i === 11 ? "pr-[7px]" : "pr-1",
                      )}
                    >
                      {head}
                      {i === 7 && <span className="pl-3 pr-1 text-[10px] text-[#707070]">/</span>}
                    </th>
                  ))}
                </tr>
              </thead>
              <tbody>
                {orders.map(([id, opened, lots, price, closed, exit, swap, profit, comment]) => {
                  const cells = [opened, "sell", lots, "gbpusd", price, "0.0000", "1.3518", closed, exit, swap, profit, comment];
                  return (
                    <tr key={id} className="odd:bg-[#ebebeb]">
                      <td className="h-[25px] border-r border-b border-[#c0c0c0] py-0 pl-[3px]">
                        <span className="flex items-center gap-1">
                          <OrderIcon />
                          {id}
                        </span>
                      </td>
                      {cells.map((cell, i) => (
                        <td
                          key={i}
                          className={clsx(
                            "whitespace-nowrap border-r border-b border-[#c0c0c0] py-0 text-right",
                            i === 11 ? "pr-[6px]" : "pr-[3px]",
                            i === 6 && comment.endsWith("[tp]") && "bg-[#60f060]",
                          )}
                        >
                          {cell}
                        </td>
                      ))}
                    </tr>
                  );
                })}
                <tr className="bg-[#ebebeb]">
                  {Array.from({ length: 13 }, (_, i) => (
                    <td key={i} className={clsx("h-[25px] border-r border-[#c0c0c0] p-0", i === 7 && "bg-[#60f060]")} />
                  ))}
                </tr>
              </tbody>
            </table>
          </div>
          <Scrollbar before="h-24" thumb="h-[130px]" />
        </div>
        <div role="tablist" className="flex h-[27px] border-t border-black">
          {terminalTabs.map((tab, i) => (
            <Tab key={tab.name} active={i === 2} divider={i !== 1 && i !== 2} className={tab.width}>
              {tab.name}
              {tab.badge && <span className="pl-[3px] pt-2 text-[12px] font-bold text-[#ee1c25]">{tab.badge}</span>}
            </Tab>
          ))}
        </div>
      </div>
    </section>
  );
}

function StatusBar() {
  const empty = ["w-[131px]", "w-[89px]", "w-[89px]", "w-[85px]", "w-[87px]", "w-[84px]"];
  const bars = [12, 11, 10, 8, 7, 5, 4, 2];
  return (
    <footer className="flex h-[29px] shrink-0 items-center border-t border-white pt-[2px]">
      <span className="flex-1 whitespace-nowrap pl-[2px]">Для вызова справки нажмите F1</span>
      <div className="h-6 w-[148px] overflow-hidden whitespace-nowrap border-l border-[#a0a0a0] pl-[5px] pr-[3px] leading-6">
        <div className="overflow-hidden">F4u-many06=1x1x2-М</div>
      </div>
      {empty.map((width, i) => (
        <div key={i} className={clsx("h-6 border-l border-[#a0a0a0]", width)} />
      ))}
      <div className="flex h-6 w-[159px] items-center gap-1 border-l border-[#a0a0a0] pl-[5px]">
        <svg width="32" height="16" aria-hidden="true" shapeRendering="crispEdges">
          {bars.map((y, i) => (
            <g key={i}>
              <rect x={i * 4} y="0" width="3" height={y - 1} fill="#6b7d1a" />
              <rect x={i * 4} y={y} width="3" height={16 - y} fill="#0f3c5c" />
            </g>
          ))}
        </svg>
        207/1 kb
      </div>
    </footer>
  );
}

function TitleBar() {
  return (
    <header className="flex h-[29px] shrink-0 items-center bg-white pl-[2px]">
      <svg width="20" height="20" viewBox="0 0 20 20" aria-hidden="true">
        <rect width="20" height="20" fill="#2b2f2b" />
        <path d="M2 2h6v2H4v2h3v2H4v3H2z" fill="#fff" />
        <path d="M14 1h5l-3 5h4l-7 7 2-5h-4z" fill="#6cc04a" />
        <path d="M4 13l6 6M10 13l-6 6M13 12v6h6" stroke="#fff" strokeWidth="2" fill="none" />
      </svg>
      <h1 className="pl-[6px] text-[14px]">1234911787: EGlobal-Demo - Демо Счет - [GBPUSD,M1]</h1>
      <div className="ml-auto flex items-center gap-[47px] pr-[25px]">
        <button type="button" aria-label="Свернуть">
          <svg width="12" height="12" aria-hidden="true"><path d="M0 6.500h12" stroke="#000" /></svg>
        </button>
        <button type="button" aria-label="Восстановить">
          <svg width="12" height="12" fill="none" stroke="#000" aria-hidden="true">
            <path d="M.5 3.500h8v8h-8zM3.500 3.500v-3h8v8h-3" />
          </svg>
        </button>
        <button type="button" aria-label="Закрыть">
          <svg width="13" height="12" stroke="#000" strokeWidth="1.200" aria-hidden="true"><path d="M0 0l12 12M12 0L0 12" /></svg>
        </button>
      </div>
    </header>
  );
}

function MenuBar() {
  const box = "flex h-[23px] w-[23px] items-center justify-center border border-[#e0e0e0] bg-white";
  return (
    <nav className="flex h-[26px] shrink-0 items-center border-b border-[#a0a0a0] pl-[5px]">
      <svg width="20" height="20" viewBox="0 0 20 20" fill="#eef5ff" stroke="#4a7fe0" aria-hidden="true">
        <path d="M1.500 1.500h14v11h-14z" />
        <path d="M5.500 7.500h13v11h-13z" />
        <path d="M1 2.500h14M5 9h13" strokeWidth="2" />
        <path d="M7 16l2-3 2 3 2-3 2 3" fill="none" />
      </svg>
      <ul className="flex gap-[21px] pl-[9px]">
        {menus.map((menu) => (
          <li key={menu}>
            <button type="button">{menu}</button>
          </li>
        ))}
      </ul>
      <div className="ml-auto flex gap-px pr-px">
        <button type="button" aria-label="Свернуть окно" className={box}>
          <svg width="12" height="12" aria-hidden="true"><path d="M3 9h6" stroke="#6c7f92" strokeWidth="2" /></svg>
        </button>
        <button type="button" aria-label="Восстановить окно" className={box}>
          <svg width="12" height="12" fill="none" stroke="#6c7f92" aria-hidden="true">
            <path d="M2.500 5.500h5v4h-5zM4.500 4.500v-3h5v5h-2M4 2h6M2 6h6" />
          </svg>
        </button>
        <button type="button" aria-label="Закрыть окно" className={box}>
          <svg width="12" height="12" stroke="#6c7f92" strokeWidth="2" aria-hidden="true"><path d="M3 3l6 6M9 3l-6 6" /></svg>
        </button>
      </div>
    </nav>
  );
}

export default function App() {
  return (
    <div className="flex h-screen flex-col overflow-hidden bg-[#f0f0f0] font-['Open_Sans','Noto_Sans',sans-serif] text-[14px] leading-5 text-black">
      <TitleBar />
      <MenuBar />
      <div className="shrink-0 border-t border-white">
        <Toolbar />
      </div>
      <main className="flex shrink-0">
        <aside className="w-[313px] shrink-0">
          <MarketWatch />
          <Navigator />
        </aside>
        <div className="min-w-0 flex-1 border-r-2 border-white">
          <Chart />
          <ChartTabs />
        </div>
      </main>
      <Terminal />
      <StatusBar />
    </div>
  );
}
